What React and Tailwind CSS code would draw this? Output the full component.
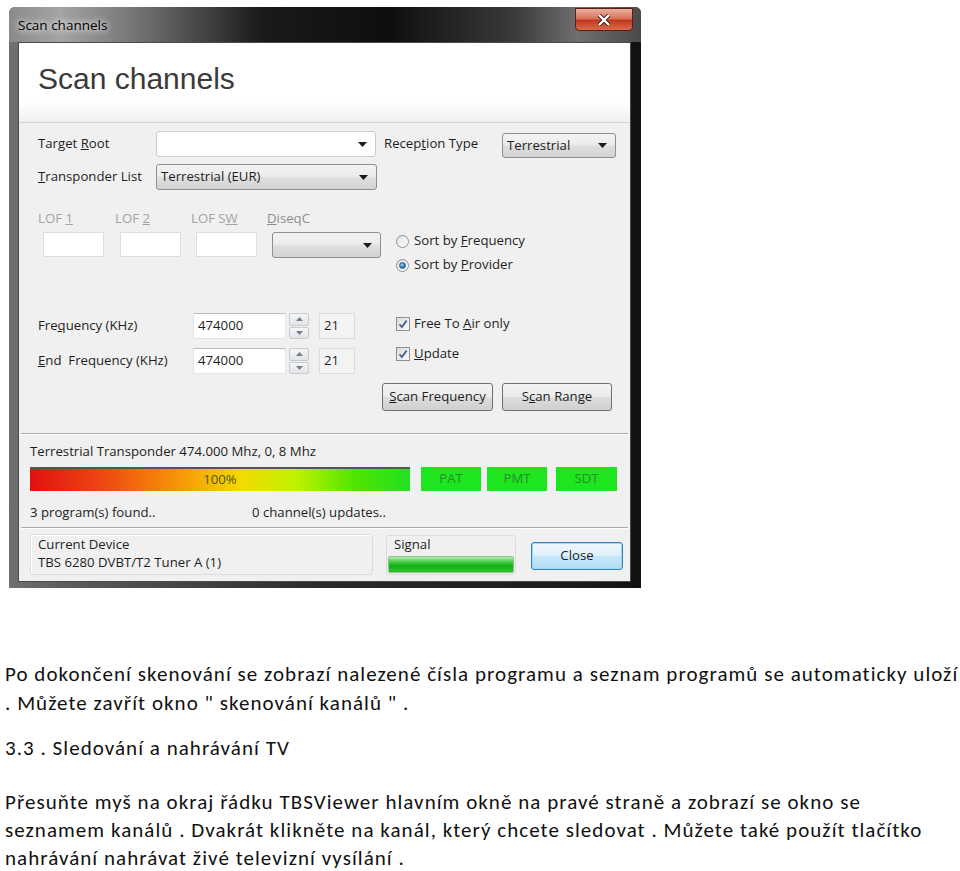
import React from 'react';

const ui = { fontFamily: '"Open Sans", "Noto Sans", sans-serif' };
const doc = { fontFamily: 'Carlito, Calibri, Lato, sans-serif' };

const Arrow = () => (
  <svg width="9" height="5" viewBox="0 0 9 5">
    <path d="M0 0h9L4.5 5z" fill="#1a1a1a" />
  </svg>
);

const Combo = ({ value, className = '', white }) => (
  <div
    className={`flex items-center justify-between rounded-[3px] border pl-[4px] pr-[8px] ${
      white
        ? 'border-[#c9cdd3] bg-white'
        : 'border-[#8e8f8f] bg-[linear-gradient(#f3f3f3,#ececec_45%,#dedede_55%,#d3d3d3)]'
    } ${className}`}
  >
    <span className="text-[#1e1e1e]">{value}</span>
    <Arrow />
  </div>
);

const Field = ({ value, className = '' }) => (
  <div className={`flex items-center border border-[#e2e6ea] border-t-[#b9bec6] bg-white pl-[4px] text-[#1e1e1e] ${className}`}>
    {value}
  </div>
);

const Spinner = () => (
  <div className="flex h-[26px] w-[20px] flex-col gap-[1px]">
    {[0, 1].map((i) => (
      <div key={i} className="flex flex-1 items-center justify-center rounded-[2px] border border-[#c6ccd4] bg-[linear-gradient(#f6f6f6,#e4e4e4)]">
        <svg width="7" height="4" viewBox="0 0 7 4">
          <path d={i === 0 ? 'M0 4h7L3.5 0z' : 'M0 0h7L3.5 4z'} fill="#6f7f95" />
        </svg>
      </div>
    ))}
  </div>
);

const Radio = ({ checked }) => (
  <div className="flex h-[13px] w-[13px] items-center justify-center rounded-full border border-[#8e8f8f] bg-[linear-gradient(135deg,#e4e4e4,#fdfdfd)]">
    {checked && <div className="h-[7px] w-[7px] rounded-full border border-[#2f5f8e] bg-[radial-gradient(circle_at_40%_35%,#9fd3f5,#2a74b8_60%,#1d4f86)]" />}
  </div>
);

const Check = () => (
  <div className="flex h-[14px] w-[14px] items-center justify-center border border-[#8e8f8f] bg-[linear-gradient(135deg,#dcdcdc,#fafafa)]">
    <svg width="10" height="10" viewBox="0 0 10 10">
      <path d="M1.5 5.2l2.3 2.8L8.6 1.6" fill="none" stroke="#4a5f97" strokeWidth="1.8" />
    </svg>
  </div>
);

const Button = ({ children, className = '' }) => (
  <div className={`flex h-[28px] items-center justify-center rounded-[3px] border border-[#707070] bg-[linear-gradient(#f3f3f3,#ebebeb_48%,#dddddd_52%,#cfcfcf)] text-[#1e1e1e] ${className}`}>
    {children}
  </div>
);

const Sep = () => <div className="h-[2px] border-t border-b border-t-[#a9a9a9] border-b-white mx-[2px]" />;

const Dialog = () => (
  <div
    className="ml-[9px] mt-[7px] flex h-[581px] w-[632px] flex-col rounded-t-[6px] bg-[linear-gradient(90deg,#707070,#5a5a5a_10%,#2a2a2a_50%,#1b1b1b_90%,#111)]"
    style={ui}
  >
    <div className="flex h-[35px] items-start justify-between rounded-t-[6px] bg-[linear-gradient(90deg,#8a8a8a,#a4a4a4_8%,#747474_20%,#1a1a1a_40%,#0e0e0e_60%,#3a3a3a_80%,#6f6f6f_90%,#4a4a4a)]">
      <span className="ml-[9px] mt-[8px] text-[13.5px] text-black [text-shadow:0_0_6px_#fff,0_0_10px_#ddd]">Scan channels</span>
      <div className="mr-[8px] mt-[1px] flex h-[23px] w-[58px] items-center justify-center rounded-b-[4px] border border-[#5a1e12] bg-[linear-gradient(#eab0a0,#d8735a_45%,#c2391f_55%,#d66c4f)]">
        <svg width="14" height="12" viewBox="0 0 14 12">
          <path d="M2 1l10 10M12 1L2 11" stroke="#3a1a12" strokeWidth="4" />
          <path d="M2 1l10 10M12 1L2 11" stroke="#fff" strokeWidth="2.4" />
        </svg>
      </div>
    </div>

    <div className="ml-[9px] flex h-[540px] w-[613px] flex-col border border-[#4a4a4a] bg-[#f0f0f0] text-[13.2px] text-[#1e1e1e]">
      {/* header */}
      <div className="flex h-[80px] items-center border-b border-[#d5d5d5] bg-[linear-gradient(#fff,#fff_75%,#f0f0f0)] pb-[8px] pl-[19px]">
        <span className="text-[30px] text-[#3a3a3a]" style={{ fontFamily: '"Liberation Sans", Arial, sans-serif' }}>Scan channels</span>
      </div>

      {/* targets */}
      <div className="flex flex-col pl-[19px]">
        <div className="mt-[8px] flex h-[26px] items-center">
          <span className="w-[118px]">Target <u>R</u>oot</span>
          <Combo white className="h-[26px] w-[220px]" value="" />
          <span className="ml-[8px] w-[118px]">Recep<u>t</u>ion Type</span>
          <Combo className="mt-[3px] h-[25px] w-[114px]" value="Terrestrial" />
        </div>
        <div className="mt-[7px] flex h-[26px] items-center">
          <span className="w-[118px]"><u>T</u>ransponder List</span>
          <Combo className="h-[26px] w-[221px]" value="Terrestrial (EUR)" />
        </div>
      </div>

      {/* LOF + sort */}
      <div className="mt-[20px] flex pl-[19px]">
        <div className="flex w-[358px]">
          {[
            ['LOF ', '1', '', 77],
            ['LOF ', '2', '', 76],
            ['LOF S', 'W', '', 76],
          ].map(([a, u, b, w]) => (
            <div key={a + u} className="flex flex-col" style={{ width: w }}>
              <span className="h-[16px] leading-[16px] text-[#a3a3a3]">{a}<u>{u}</u>{b}</span>
              <div className="ml-[5px] mt-[6px] h-[25px] w-[61px] border border-[#dedede] bg-white" />
            </div>
          ))}
          <div className="flex flex-col">
            <span className="h-[16px] leading-[16px] text-[#8d8d8d]"><u>D</u>iseqC</span>
            <Combo className="ml-[5px] mt-[6px] h-[26px] w-[109px]" value="" />
          </div>
        </div>
        <div className="flex flex-col pt-[19px]">
          <div className="flex h-[24px] items-center gap-[5px]">
            <Radio />
            <span>Sort by <u>F</u>requency</span>
          </div>
          <div className="flex h-[24px] items-center gap-[5px]">
            <Radio checked />
            <span>Sort by <u>P</u>rovider</span>
          </div>
        </div>
      </div>

      {/* frequency */}
      <div className="mt-[36px] flex pl-[19px]">
        <div className="flex w-[358px] flex-col gap-[9px]">
          {[
            [<>Fre<u>q</u>uency (KHz)</>, 'a'],
            [<><u>E</u>nd  Frequency (KHz)</>, 'b'],
          ].map(([label, k]) => (
            <div key={k} className="flex h-[26px] items-center">
              <span className="w-[155px] whitespace-pre">{label}</span>
              <Field className="h-[26px] w-[93px]" value="474000" />
              <div className="ml-[3px]"><Spinner /></div>
              <div className="ml-[10px] flex h-[26px] w-[36px] items-center border border-[#dcdcdc] bg-[#f3f3f3] pl-[4px]">21</div>
            </div>
          ))}
        </div>
        <div className="flex flex-col gap-[8px]">
          <div className="flex h-[22px] items-center gap-[4px]">
            <Check />
            <span>Free To <u>A</u>ir only</span>
          </div>
          <div className="flex h-[22px] items-center gap-[4px]">
            <Check />
            <span><u>U</u>pdate</span>
          </div>
        </div>
      </div>

      <div className="ml-[363px] mt-[9px] flex gap-[9px]">
        <Button className="w-[111px]"><span><u>S</u>can Frequency</span></Button>
        <Button className="w-[110px]"><span>S<u>c</u>an Range</span></Button>
      </div>

      <div className="mt-[22px]"><Sep /></div>

      {/* status */}
      <div className="flex flex-col pl-[11px]">
        <span className="mt-[8px] h-[16px] leading-[16px]">Terrestrial Transponder 474.000 Mhz, 0, 8 Mhz</span>
        <div className="mt-[8px] flex h-[24px] items-stretch">
          <div className="flex w-[380px] items-center justify-center border-t-2 border-[#555] bg-[linear-gradient(90deg,#e01010,#ee4a10_20%,#f79a08_40%,#f2dc00_56%,#bff200_70%,#52e600_85%,#22e022)] text-[#4a5a20]">
            100%
          </div>
          <div className="ml-[11px] flex w-[60px] items-center justify-center bg-[#1ee61e] text-[#2e8a2e]">PAT</div>
          <div className="ml-[6px] flex w-[60px] items-center justify-center bg-[#1ee61e] text-[#2e8a2e]">PMT</div>
          <div className="ml-[9px] flex w-[61px] items-center justify-center bg-[#1ee61e] text-[#2e8a2e]">SDT</div>
        </div>
        <div className="mt-[13px] flex h-[16px] items-center leading-[16px]">
          <span className="w-[222px]">3 program(s) found..</span>
          <span>0 channel(s) updates..</span>
        </div>
      </div>

      <div className="mt-[7px]"><Sep /></div>

      <div className="mt-[5px] flex items-start pl-[11px]">
        <div className="flex h-[41px] w-[343px] flex-col rounded-[3px] border border-[#dcdcdc] pl-[7px] leading-[18px] shadow-[inset_1px_1px_0_#fff]">
          <span>Current Device</span>
          <span>TBS 6280 DVBT/T2 Tuner A (1)</span>
        </div>
        <div className="ml-[13px] mt-[1px] flex h-[40px] w-[130px] flex-col rounded-[3px] border border-[#dcdcdc]">
          <span className="pl-[7px] leading-[16px]">Signal</span>
          <div className="mx-[1px] mt-[4px] h-[17px] rounded-[2px] border border-[#8fbf8f] bg-[linear-gradient(#b8eeb8,#3ccb3c_35%,#13b013_60%,#2ec42e)]" />
        </div>
        <div className="ml-[15px] mt-[8px] flex h-[28px] w-[92px] items-center justify-center rounded-[3px] border border-[#3c7fb1] bg-[linear-gradient(#eef7fd,#dff1fc_48%,#c6e7fa_52%,#b4dcf4)] shadow-[inset_0_0_0_1px_#9ed8f6]">
          Close
        </div>
      </div>
    </div>
  </div>
);

const App = () => (
  <div className="h-[871px] w-[960px] overflow-hidden bg-white text-[#111]">
    <Dialog />
    <div className="ml-[5px] mt-[72px] whitespace-nowrap text-[21px] leading-[29px] tracking-[1.04px]" style={doc}>
      <div>Po dokončení skenování se zobrazí nalezené čísla programu a seznam programů se automaticky uloží</div>
      <div>. Můžete zavřít okno " skenování kanálů " .</div>
      <div className="mt-[16px]">3.3 . Sledování a nahrávání TV</div>
      <div className="mt-[25px] leading-[28px]">
        <div>Přesuňte myš na okraj řádku TBSViewer hlavním okně na pravé straně a zobrazí se okno se</div>
        <div>seznamem kanálů . Dvakrát klikněte na kanál, který chcete sledovat . Můžete také použít tlačítko</div>
        <div>nahrávání nahrávat živé televizní vysílání .</div>
      </div>
    </div>
  </div>
);

export default App;
